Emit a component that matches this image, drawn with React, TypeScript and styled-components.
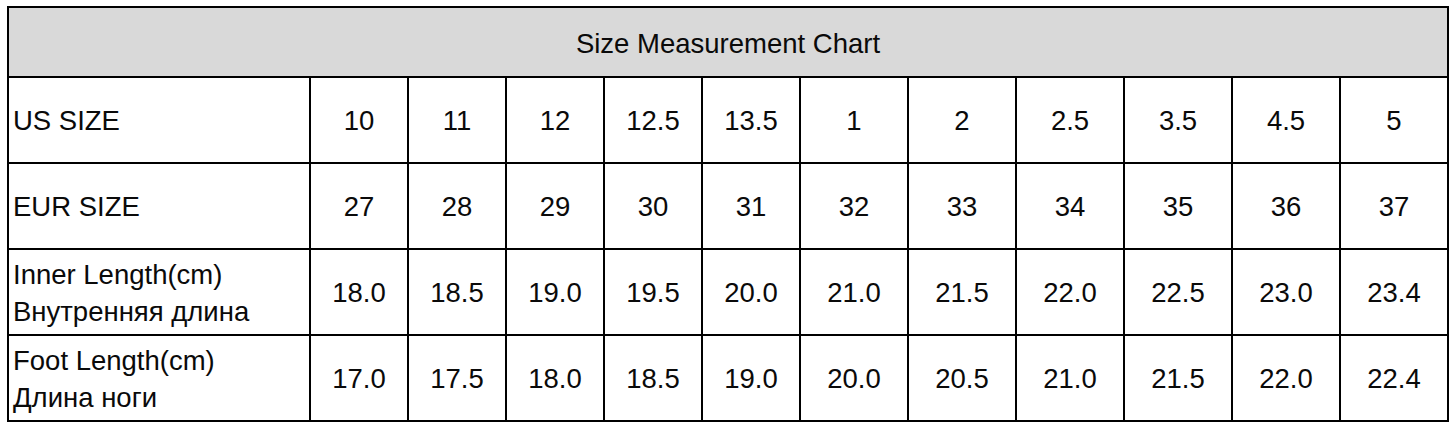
import React from "react";
import styled, { createGlobalStyle } from "styled-components";

const GlobalStyle = createGlobalStyle`
  html, body {
    margin: 0;
    padding: 0;
    background: #ffffff;
  }
  body {
    font-family: "Liberation Sans", Arial, sans-serif;
    color: #000;
  }
`;

const Page = styled.div`
  padding: 6px 0 0 7px;
`;

const Chart = styled.div`
  display: grid;
  grid-template-columns: 302px repeat(5, 98px) repeat(6, 108px);
  grid-template-rows: 70px repeat(4, 86px);
  width: max-content;
  border-top: 2px solid #000;
  border-left: 2px solid #000;
  font-family: "Liberation Sans", Arial, sans-serif;
  font-size: 27.5px;
  color: #0a0a0a;
`;

const Cell = styled.div<{ $label?: boolean }>`
  box-sizing: border-box;
  border-right: 2px solid #000;
  border-bottom: 2px solid #000;
  display: flex;
  flex-direction: column;
  justify-content: center;
  align-items: ${(p) => (p.$label ? "flex-start" : "center")};
  padding: ${(p) => (p.$label ? "1px 0 0 4px" : "1px 0 0 0")};
  line-height: 37px;
  white-space: nowrap;
`;

const TitleCell = styled.div`
  grid-column: 1 / -1;
  box-sizing: border-box;
  background: #d9d9d9;
  border-right: 2px solid #000;
  border-bottom: 2px solid #000;
  display: flex;
  align-items: center;
  justify-content: center;
  font-size: 27.5px;
  padding-top: 3px;
`;

type Row = { label: string[]; values: string[] };

const rows: Row[] = [
  {
    label: ["US SIZE"],
    values: ["10", "11", "12", "12.5", "13.5", "1", "2", "2.5", "3.5", "4.5", "5"],
  },
  {
    label: ["EUR SIZE"],
    values: ["27", "28", "29", "30", "31", "32", "33", "34", "35", "36", "37"],
  },
  {
    label: ["Inner Length(cm)", "Внутренняя длина"],
    values: ["18.0", "18.5", "19.0", "19.5", "20.0", "21.0", "21.5", "22.0", "22.5", "23.0", "23.4"],
  },
  {
    label: ["Foot Length(cm)", "Длина ноги"],
    values: ["17.0", "17.5", "18.0", "18.5", "19.0", "20.0", "20.5", "21.0", "21.5", "22.0", "22.4"],
  },
];

export default function App() {
  return (
    <>
      <GlobalStyle />
      <Page>
        <Chart>
          <TitleCell>Size Measurement Chart</TitleCell>
          {rows.map((row, ri) => (
            <React.Fragment key={ri}>
              <Cell $label>
                {row.label.map((l, li) => (
                  <span key={li}>{l}</span>
                ))}
              </Cell>
              {row.values.map((v, vi) => (
                <Cell key={vi}>{v}</Cell>
              ))}
            </React.Fragment>
          ))}
        </Chart>
      </Page>
    </>
  );
}
